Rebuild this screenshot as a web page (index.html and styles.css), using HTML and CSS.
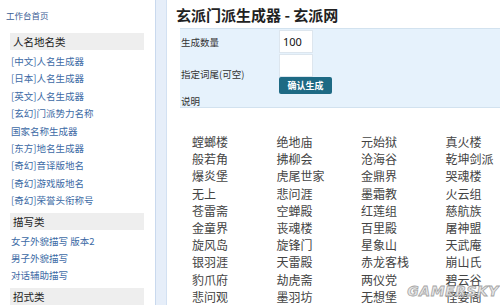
FILE: index.html
```html
<!DOCTYPE html>
<html lang="zh-CN">
<head>
  <meta charset="UTF-8" />
  <title>玄派门派生成器 - 玄派网</title>
  <link rel="stylesheet" href="styles.css">
</head>
<body>

<div class="page">
  <aside class="sidebar">
    <a class="home-link" href="#">工作台首页</a>

    <h3 class="side-title">人名地名类</h3>
    <ul class="side-links">
      <li><a href="#">[中文]人名生成器</a></li>
      <li><a href="#">[日本]人名生成器</a></li>
      <li><a href="#">[英文]人名生成器</a></li>
      <li><a href="#">[玄幻]门派势力名称</a></li>
      <li><a href="#">国家名称生成器</a></li>
      <li><a href="#">[东方]地名生成器</a></li>
      <li><a href="#">[奇幻]音译版地名</a></li>
      <li><a href="#">[奇幻]游戏版地名</a></li>
      <li><a href="#">[奇幻]荣誉头衔称号</a></li>
    </ul>

    <h3 class="side-title">描写类</h3>
    <ul class="side-links">
      <li><a href="#">女子外貌描写 版本2</a></li>
      <li><a href="#">男子外貌描写</a></li>
      <li><a href="#">对话辅助描写</a></li>
    </ul>

    <h3 class="side-title">招式类</h3>
  </aside>

  <div class="divider"></div>

  <main class="main">
    <h1 class="page-title">玄派门派生成器 - 玄派网</h1>

    <div class="gen-form">
      <label class="form-label" for="count">生成数量</label>
      <input class="form-input" type="text" id="count" value="100">

      <label class="form-label" for="suffix">指定词尾(可空)</label>
      <div class="form-stack">
        <input class="form-input" type="text" id="suffix">
        <button class="btn-generate" onclick="generateNames()">确认生成</button>
      </div>

      <div class="form-note">说明</div>
    </div>

    <ul class="name-list" id="nameList"></ul>

    <span class="watermark">GAMERSKY</span>
  </main>
</div>

<script>
// Names shown in the result grid, row by row
const names = [
  '螳螂楼', '绝地庙', '元始狱', '真火楼',
  '般若角', '拂柳会', '沧海谷', '乾坤剑派',
  '爆炎堡', '虎尾世家', '金鼎界', '哭魂楼',
  '无上', '悲问涯', '墨霜教', '火云组',
  '苍雷斋', '空蝉殿', '红莲组', '慈航族',
  '金童界', '丧魂楼', '百里殿', '屠神盟',
  '旋风岛', '旋锋门', '星象山', '天武庵',
  '银羽涯', '天雷殿', '赤龙客栈', '崩山氏',
  '豹爪府', '劫虎斋', '两仪党', '碧云谷',
  '悲问观', '墨羽坊', '无想堡', '怪婆阁'
];

function renderNames(list) {
  const target = document.getElementById('nameList');
  target.innerHTML = '';
  for (const name of list) {
    const li = document.createElement('li');
    li.textContent = name;
    target.appendChild(li);
  }
}

function generateNames() {
  const suffix = document.getElementById('suffix').value.trim();
  const count = parseInt(document.getElementById('count').value, 10) || names.length;
  const list = names.slice(0, count).map(n => suffix ? n.slice(0, -1) + suffix : n);
  renderNames(list);
}

renderNames(names);
</script>

</body>
</html>
```

FILE: styles.css
```css
body {
  margin: 0;
  background: #fff;
  font-family: "Noto Sans CJK SC", "Noto Sans", sans-serif;
  color: #333;
}
a {
  text-decoration: none;
}
ul {
  list-style: none;
  margin: 0;
  padding: 0;
}

.page {
  display: flex;
  min-height: 305px;
}

/* Sidebar */
.sidebar {
  width: 155px;
  box-sizing: border-box;
  padding: 9px 11px 0 10px;
}
.home-link {
  display: block;
  margin-left: -4px;
  font-size: 8.5px;
  line-height: 12px;
  color: #3a5d95;
  margin-bottom: 12px;
}
.side-title {
  margin: 0;
  height: 17px;
  line-height: 17px;
  padding-left: 3px;
  background: #eeeeee;
  font-size: 10.5px;
  font-weight: normal;
  color: #222;
}
.side-links {
  margin: 3px 0 3px 1px;
}
.side-links li {
  line-height: 17.4px;
  font-size: 9.5px;
}
.side-links a {
  color: #3c6aa5;
}

.divider {
  width: 10px;
  background: #e6eef9;
  border-left: 1px solid #c9d9ee;
  border-right: 1px solid #d3e1f2;
}

/* Main area */
.main {
  flex: 1;
  position: relative;
  overflow: hidden;
}
.page-title {
  margin: 5px 0 3px 9px;
  font-size: 15px;
  line-height: 20px;
  font-weight: bold;
  color: #222;
}

.gen-form {
  margin-left: 13px;
  display: grid;
  grid-template-columns: 98px auto;
  justify-content: start;
  row-gap: 1px;
  padding: 1px 0 0 1px;
  background: #e6f2fc;
  border-top: 1px solid #d2e2ef;
  border-bottom: 1px solid #d2e2ef;
}
.form-label {
  align-self: center;
  font-size: 9.5px;
  color: #333;
}
.form-input {
  width: 34px;
  height: 23px;
  box-sizing: border-box;
  margin: 0;
  padding: 0 0 0 3px;
  border: 1px solid #dde6ee;
  background: #fff;
  font-family: "Noto Sans", sans-serif;
  font-size: 11px;
  color: #111;
  outline: none;
}
.form-stack {
  display: flex;
  flex-direction: column;
  align-items: flex-start;
}
.btn-generate {
  width: 53px;
  height: 17px;
  margin: 0;
  padding: 0;
  border: none;
  border-radius: 2px;
  background: #1e6a84;
  color: #fff;
  font-family: "Noto Sans CJK SC", sans-serif;
  font-size: 9px;
  font-weight: bold;
  cursor: pointer;
}
.form-note {
  grid-column: 1 / 3;
  font-size: 9.5px;
  line-height: 12px;
  color: #333;
}

.name-list {
  margin-top: 25px;
  padding-left: 25px;
  display: grid;
  grid-template-columns: repeat(4, 84.5px);
}
.name-list li {
  font-size: 12px;
  line-height: 17.2px;
  color: #444;
  white-space: nowrap;
}

/* Site watermark over the bottom-right corner */
.watermark {
  position: absolute;
  right: 1px;
  bottom: 6px;
  font-family: "DejaVu Sans", sans-serif;
  font-size: 14px;
  font-weight: bold;
  font-style: italic;
  letter-spacing: 0.5px;
  color: #e4e4e4;
  -webkit-text-stroke: 0.8px #9a9a9a;
  opacity: 0.9;
}
```
